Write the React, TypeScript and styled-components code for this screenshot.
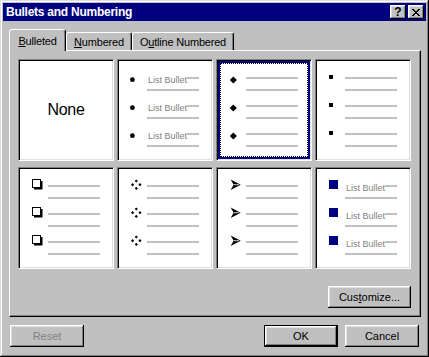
import styled, { createGlobalStyle } from "styled-components";

const GlobalStyle = createGlobalStyle`
  html, body {
    margin: 0;
    padding: 0;
    background: #c0c0c0;
  }
  body {
    font-family: "Liberation Sans", Arial, sans-serif;
    font-size: 11px;
    color: #000;
  }
`;

const Window = styled.div`
  width: 429px;
  height: 357px;
  box-sizing: border-box;
  padding: 3px;
  background: #c0c0c0;
  box-shadow: inset -1px -1px #000, inset 1px 1px #dfdfdf, inset -2px -2px #808080,
    inset 2px 2px #fff;
  display: flex;
  flex-direction: column;
`;

const TitleBar = styled.div`
  height: 18px;
  background: #000080;
  display: flex;
  align-items: center;
  padding: 0 2px 0 3px;
`;

const Title = styled.span`
  flex: 1;
  color: #fff;
  font-weight: bold;
  font-size: 12px;
  letter-spacing: -0.25px;
  white-space: nowrap;
`;

const TitleButton = styled.button`
  width: 16px;
  height: 14px;
  padding: 0;
  border: 0;
  background: #c0c0c0;
  box-shadow: inset -1px -1px #000, inset 1px 1px #fff, inset -2px -2px #808080,
    inset 2px 2px #dfdfdf;
  display: flex;
  align-items: center;
  justify-content: center;
  font-family: "Liberation Sans", Arial, sans-serif;
  font-weight: bold;
  font-size: 12px;
  line-height: 1;
  color: #000;

  & + & {
    margin-left: 2px;
  }
`;

const TabRow = styled.div`
  display: flex;
  align-items: flex-end;
  height: 21px;
  margin: 8px 0 0 6px;
  position: relative;
  z-index: 1;
`;

const Tab = styled.div<{ $active?: boolean; $width: number }>`
  box-sizing: border-box;
  width: ${(p) => p.$width}px;
  height: ${(p) => (p.$active ? 22 : 18)}px;
  margin-bottom: ${(p) => (p.$active ? -1 : 0)}px;
  padding-top: ${(p) => (p.$active ? 1 : 0)}px;
  background: #c0c0c0;
  border-left: 1px solid #fff;
  border-top: 1px solid #fff;
  border-right: 1px solid #000;
  border-radius: 3px 3px 0 0;
  box-shadow: inset -1px 0 #808080;
  display: flex;
  align-items: center;
  justify-content: center;
  letter-spacing: -0.2px;
  white-space: nowrap;
`;

const Panel = styled.div`
  width: 412px;
  height: 267px;
  box-sizing: border-box;
  margin-left: 6px;
  padding: 8px 9px 8px 8px;
  background: #c0c0c0;
  border-style: solid;
  border-width: 1px;
  border-color: #fff #000 #000 #fff;
  box-shadow: inset -1px -1px #808080;
  display: flex;
  flex-direction: column;
`;

const BulletGrid = styled.div`
  display: grid;
  grid-template-columns: repeat(4, 96px);
  grid-template-rows: repeat(2, 102px);
  column-gap: 3px;
  row-gap: 6px;
`;

const Cell = styled.div<{ $selected?: boolean }>`
  box-sizing: border-box;
  background: #fff;
  border: 1px solid;
  border-color: #808080 #fff #fff #808080;
  box-shadow: inset 1px 1px #000, inset -1px -1px #dfdfdf
    ${(p) => (p.$selected ? ", inset 0 0 0 3px #000080" : "")};
  outline: ${(p) => (p.$selected ? "1px dotted #000" : "none")};
  outline-offset: -5px;
  padding: 12px 0 0 11px;
  display: flex;
  flex-direction: column;
  gap: 4px;
`;

const NoneCell = styled(Cell)`
  padding: 0;
  align-items: center;
  justify-content: center;
  font-size: 16px;
  letter-spacing: -0.3px;
`;

const Item = styled.div`
  display: grid;
  grid-template-columns: 16px 52px;
  grid-template-rows: 12px 12px;
  column-gap: 2px;
`;

const BulletSlot = styled.div`
  grid-row: 1;
  grid-column: 1;
  height: 12px;

  svg {
    display: block;
    margin-top: -2px;
  }
`;

const LineRow = styled.div<{ $row: number }>`
  grid-column: 2;
  grid-row: ${(p) => p.$row};
  display: flex;
  align-items: flex-start;
  height: 12px;
`;

const Rule = styled.div`
  flex: 1;
  height: 2px;
  margin-top: 5px;
  background: #c0c0c0;
`;

const Label = styled.span`
  font-size: 9px;
  line-height: 9px;
  margin-top: 4px;
  padding-left: 1px;
  color: #808080;
  white-space: nowrap;
`;

const PanelFooter = styled.div`
  display: flex;
  justify-content: flex-end;
  margin-top: 17px;
`;

const Button = styled.button<{ $default?: boolean; $width?: number }>`
  box-sizing: border-box;
  width: ${(p) => p.$width ?? 74}px;
  height: 22px;
  padding: 0;
  background: #c0c0c0;
  border: ${(p) => (p.$default ? "1px solid #000" : "0")};
  box-shadow: inset -1px -1px #000, inset 1px 1px #fff, inset -2px -2px #808080,
    inset 2px 2px #dfdfdf;
  font-family: "Liberation Sans", Arial, sans-serif;
  font-size: 11px;
  color: #000;

  &:disabled {
    color: #808080;
  }
`;

const ButtonRow = styled.div`
  display: flex;
  gap: 7px;
  margin-top: 8px;
  padding: 0 7px;
`;

const Spacer = styled.div`
  flex: 1;
`;

type BulletKind = "dot" | "diamond" | "square" | "box" | "quad" | "arrow" | "navy";

const Bullet = ({ kind }: { kind: BulletKind }) => (
  <svg width="16" height="16" viewBox="0 0 16 16">
    {kind === "dot" && <circle cx="3.4" cy="9.7" r="2.4" fill="#000" />}
    {kind === "diamond" && <polygon points="5.3,6.4 8.9,10 5.3,13.6 1.7,10" fill="#000" />}
    {kind === "square" && <rect x="2" y="5" width="4" height="4" fill="#000" />}
    {kind === "box" && (
      <>
        <rect x="4" y="3" width="8.5" height="8.5" fill="#000" />
        <rect x="2.5" y="1.5" width="8" height="8" fill="#fff" stroke="#000" />
      </>
    )}
    {kind === "quad" && (
      <g fill="#000">
        <polygon points="7.3,1.4 8.9,3 7.3,4.6 5.7,3" />
        <polygon points="7.3,8.8 8.9,10.4 7.3,12 5.7,10.4" />
        <polygon points="3.6,5.1 5.2,6.7 3.6,8.3 2,6.7" />
        <polygon points="11,5.1 12.6,6.7 11,8.3 9.4,6.7" />
      </g>
    )}
    {kind === "arrow" && (
      <>
        <polygon points="2.7,1.4 12.7,6.7 2.7,12 5.6,6.7" fill="#000" />
        <line x1="5.6" y1="6.7" x2="11" y2="6.7" stroke="#fff" strokeWidth="0.8" />
      </>
    )}
    {kind === "navy" && <rect x="2" y="2" width="9" height="9" fill="#000080" />}
  </svg>
);

const BulletList = ({ kind, label, selected }: { kind: BulletKind; label?: boolean; selected?: boolean }) => (
  <Cell $selected={selected}>
    {[0, 1, 2].map((i) => (
      <Item key={i}>
        <BulletSlot>
          <Bullet kind={kind} />
        </BulletSlot>
        <LineRow $row={1}>
          {label && <Label>List Bullet</Label>}
          <Rule />
        </LineRow>
        <LineRow $row={2}>
          <Rule />
        </LineRow>
      </Item>
    ))}
  </Cell>
);

const CloseGlyph = () => (
  <svg width="8" height="7" viewBox="0 0 8 7">
    <path
      fill="#000"
      d="M0 0h2v1H0zM6 0h2v1H6zM1 1h2v1H1zM5 1h2v1H5zM2 2h4v1H2zM3 3h2v1H3zM2 4h4v1H2zM1 5h2v1H1zM5 5h2v1H5zM0 6h2v1H0zM6 6h2v1H6z"
    />
  </svg>
);

export default function App() {
  return (
    <>
      <GlobalStyle />
      <Window>
        <TitleBar>
          <Title>Bullets and Numbering</Title>
          <TitleButton>?</TitleButton>
          <TitleButton>
            <CloseGlyph />
          </TitleButton>
        </TitleBar>

        <TabRow>
          <Tab $active $width={57}>
            <span>
              <u>B</u>ulleted
            </span>
          </Tab>
          <Tab $width={66}>
            <span>
              <u>N</u>umbered
            </span>
          </Tab>
          <Tab $width={102}>
            <span>
              O<u>u</u>tline Numbered
            </span>
          </Tab>
        </TabRow>

        <Panel>
          <BulletGrid>
            <NoneCell>None</NoneCell>
            <BulletList kind="dot" label />
            <BulletList kind="diamond" selected />
            <BulletList kind="square" />
            <BulletList kind="box" />
            <BulletList kind="quad" />
            <BulletList kind="arrow" />
            <BulletList kind="navy" label />
          </BulletGrid>
          <PanelFooter>
            <Button $width={83}>
              Cus<u>t</u>omize...
            </Button>
          </PanelFooter>
        </Panel>

        <ButtonRow>
          <Button disabled>Reset</Button>
          <Spacer />
          <Button $default>OK</Button>
          <Button>Cancel</Button>
        </ButtonRow>
      </Window>
    </>
  );
}
